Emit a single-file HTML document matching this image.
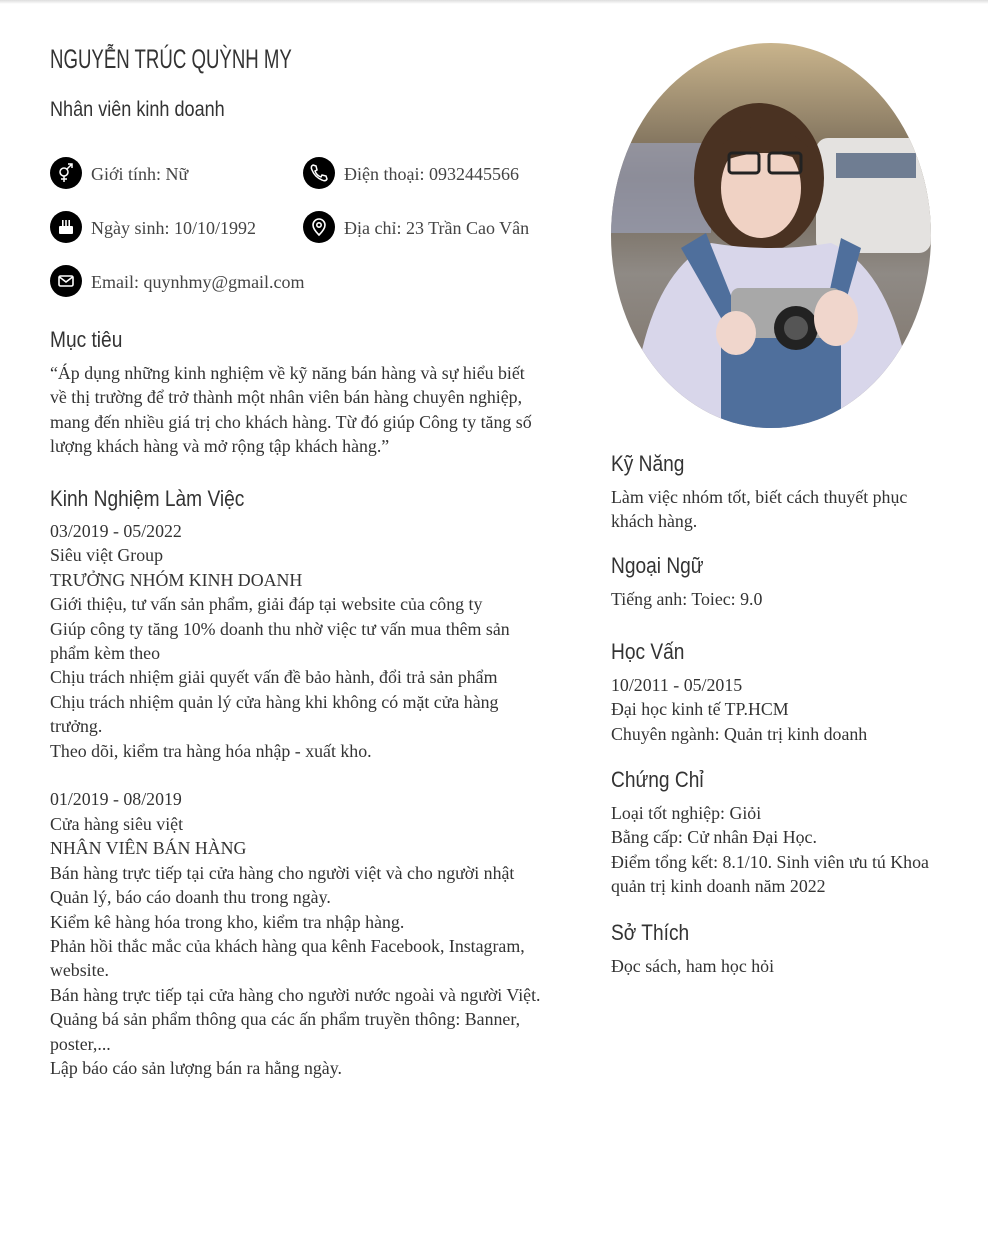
<!DOCTYPE html>
<html><head><meta charset="utf-8"><style>
*{margin:0;padding:0;box-sizing:border-box}
html,body{width:988px;height:1250px;background:#fff;overflow:hidden}
body{position:relative;font-family:"Liberation Serif",serif;color:#333;font-size:17.85px}
.topbar{position:absolute;left:0;top:0;width:988px;height:4px;background:linear-gradient(#ddd,#fff)}
.h{position:absolute;font-family:"Liberation Sans",sans-serif;color:#333;white-space:nowrap;transform-origin:left top;transform:scaleX(.87)}
.t{position:absolute;line-height:24.4px;white-space:nowrap}
.ic{position:absolute;width:32px;height:32px;border-radius:50%;background:#000;display:flex;align-items:center;justify-content:center}
.it{position:absolute;font-size:18px;line-height:24px;white-space:nowrap;color:#444}
</style></head><body>
<div class="topbar"></div>
<div class="h" style="left:50px;top:44px;font-size:27px;transform:scaleX(.69)">NGUYỄN TRÚC QUỲNH MY</div>
<div class="h" style="left:50px;top:98px;font-size:21px;transform:scaleX(.86)">Nhân viên kinh doanh</div>

<div class="ic" style="left:50px;top:157px"><svg width="20" height="20" viewBox="0 0 20 20" fill="none" stroke="#fff" stroke-width="1.5"><circle cx="8" cy="9" r="4"/><path d="M8 13v6M5 16h6M11 6l5-5M12 1h4v4"/></svg></div>
<div class="it" style="left:91px;top:162px">Giới tính: Nữ</div>
<div class="ic" style="left:303px;top:157px"><svg width="20" height="20" viewBox="0 0 20 20" fill="none" stroke="#fff" stroke-width="1.5"><path d="M4 2l3 1 1 4-2 1c1 3 3 5 6 6l1-2 4 1 1 3c-1 2-3 2-5 1C8 15 5 12 3 7 2 5 2 3 4 2z"/></svg></div>
<div class="it" style="left:344px;top:162px">Điện thoại: 0932445566</div>
<div class="ic" style="left:50px;top:211px"><svg width="20" height="20" viewBox="0 0 20 20" fill="#fff"><rect x="6" y="3" width="1.6" height="6"/><rect x="9.2" y="3" width="1.6" height="6"/><rect x="12.4" y="3" width="1.6" height="6"/><rect x="3" y="9" width="14" height="8" rx="1"/></svg></div>
<div class="it" style="left:91px;top:216px">Ngày sinh: 10/10/1992</div>
<div class="ic" style="left:303px;top:211px"><svg width="20" height="20" viewBox="0 0 20 20" fill="none" stroke="#fff" stroke-width="1.6"><path d="M10 18c-4-4-6-7-6-10a6 6 0 0112 0c0 3-2 6-6 10z"/><circle cx="10" cy="8" r="2.2"/></svg></div>
<div class="it" style="left:344px;top:216px">Địa chỉ: 23 Trần Cao Vân</div>
<div class="ic" style="left:50px;top:265px"><svg width="20" height="20" viewBox="0 0 20 20" fill="none" stroke="#fff" stroke-width="1.6"><rect x="3" y="5" width="14" height="10" rx="1.5"/><path d="M3.5 6l6.5 5 6.5-5"/></svg></div>
<div class="it" style="left:91px;top:270px">Email: quynhmy@gmail.com</div>

<div class="h" style="left:50px;top:327px;font-size:22px">Mục tiêu</div>
<div class="t" style="left:50px;top:361px">“Áp dụng những kinh nghiệm về kỹ năng bán hàng và sự hiểu biết<br>về thị trường để trở thành một nhân viên bán hàng chuyên nghiệp,<br>mang đến nhiều giá trị cho khách hàng. Từ đó giúp Công ty tăng số<br>lượng khách hàng và mở rộng tập khách hàng.”</div>

<div class="h" style="left:50px;top:486px;font-size:22px">Kinh Nghiệm Làm Việc</div>
<div class="t" style="left:50px;top:519px">03/2019 - 05/2022<br>Siêu việt Group<br>TRƯỞNG NHÓM KINH DOANH<br>Giới thiệu, tư vấn sản phẩm, giải đáp tại website của công ty<br>Giúp công ty tăng 10% doanh thu nhờ việc tư vấn mua thêm sản<br>phẩm kèm theo<br>Chịu trách nhiệm giải quyết vấn đề bảo hành, đổi trả sản phẩm<br>Chịu trách nhiệm quản lý cửa hàng khi không có mặt cửa hàng<br>trưởng.<br>Theo dõi, kiểm tra hàng hóa nhập - xuất kho.<br><br>01/2019 - 08/2019<br>Cửa hàng siêu việt<br>NHÂN VIÊN BÁN HÀNG<br>Bán hàng trực tiếp tại cửa hàng cho người việt và cho người nhật<br>Quản lý, báo cáo doanh thu trong ngày.<br>Kiểm kê hàng hóa trong kho, kiểm tra nhập hàng.<br>Phản hồi thắc mắc của khách hàng qua kênh Facebook, Instagram,<br>website.<br>Bán hàng trực tiếp tại cửa hàng cho người nước ngoài và người Việt.<br>Quảng bá sản phẩm thông qua các ấn phẩm truyền thông: Banner,<br>poster,...<br>Lập báo cáo sản lượng bán ra hằng ngày.</div>

<svg style="position:absolute;left:611px;top:43px" width="320" height="385" viewBox="0 0 320 385">
<defs><clipPath id="c"><ellipse cx="160" cy="192.5" rx="160" ry="192.5"/></clipPath>
<linearGradient id="bg" x1="0" y1="0" x2="0" y2="1"><stop offset="0" stop-color="#c9b48c"/><stop offset="0.35" stop-color="#6d6151"/><stop offset="0.6" stop-color="#8f8a85"/><stop offset="1" stop-color="#7a6e62"/></linearGradient></defs>
<g clip-path="url(#c)">
<rect width="320" height="385" fill="url(#bg)"/>
<rect x="0" y="100" width="100" height="90" fill="#9aa0b8" opacity=".7"/>
<rect x="205" y="95" width="115" height="115" rx="12" fill="#e4e2e0"/>
<rect x="225" y="110" width="80" height="25" fill="#6f7d92"/>
<ellipse cx="148" cy="135" rx="65" ry="75" fill="#4a3222"/>
<ellipse cx="150" cy="145" rx="40" ry="50" fill="#f0d2c4"/>
<path d="M108 105 q45 -45 90 0 l0 15 q-45 -20 -90 0z" fill="#4a3222"/>
<rect x="118" y="110" width="30" height="20" rx="3" fill="none" stroke="#222" stroke-width="3"/>
<rect x="158" y="110" width="32" height="20" rx="3" fill="none" stroke="#222" stroke-width="3"/>
<path d="M20 385 q10 -150 80 -185 q60 10 120 0 q70 30 85 185z" fill="#d8d6ea"/>
<path d="M70 205 l40 70 v110 h120 v-110 l20 -70 l-20 -10 l-15 70 h-90 l-30 -75z" fill="#4f6f9c"/>
<rect x="120" y="245" width="110" height="50" rx="8" fill="#a8a8a8"/>
<circle cx="185" cy="285" r="22" fill="#222"/><circle cx="185" cy="285" r="12" fill="#555"/>
<ellipse cx="125" cy="290" rx="20" ry="22" fill="#f0d6cc"/><ellipse cx="225" cy="275" rx="22" ry="28" fill="#f0d6cc"/>
</g></svg>

<div class="h" style="left:611px;top:451px;font-size:22px">Kỹ Năng</div>
<div class="t" style="left:611px;top:485px">Làm việc nhóm tốt, biết cách thuyết phục<br>khách hàng.</div>
<div class="h" style="left:611px;top:553px;font-size:22px">Ngoại Ngữ</div>
<div class="t" style="left:611px;top:587px">Tiếng anh: Toiec: 9.0</div>
<div class="h" style="left:611px;top:639px;font-size:22px">Học Vấn</div>
<div class="t" style="left:611px;top:673px">10/2011 - 05/2015<br>Đại học kinh tế TP.HCM<br>Chuyên ngành: Quản trị kinh doanh</div>
<div class="h" style="left:611px;top:767px;font-size:22px">Chứng Chỉ</div>
<div class="t" style="left:611px;top:801px">Loại tốt nghiệp: Giỏi<br>Bằng cấp: Cử nhân Đại Học.<br>Điểm tổng kết: 8.1/10. Sinh viên ưu tú Khoa<br>quản trị kinh doanh năm 2022</div>
<div class="h" style="left:611px;top:920px;font-size:22px">Sở Thích</div>
<div class="t" style="left:611px;top:954px">Đọc sách, ham học hỏi</div>
</body></html>
